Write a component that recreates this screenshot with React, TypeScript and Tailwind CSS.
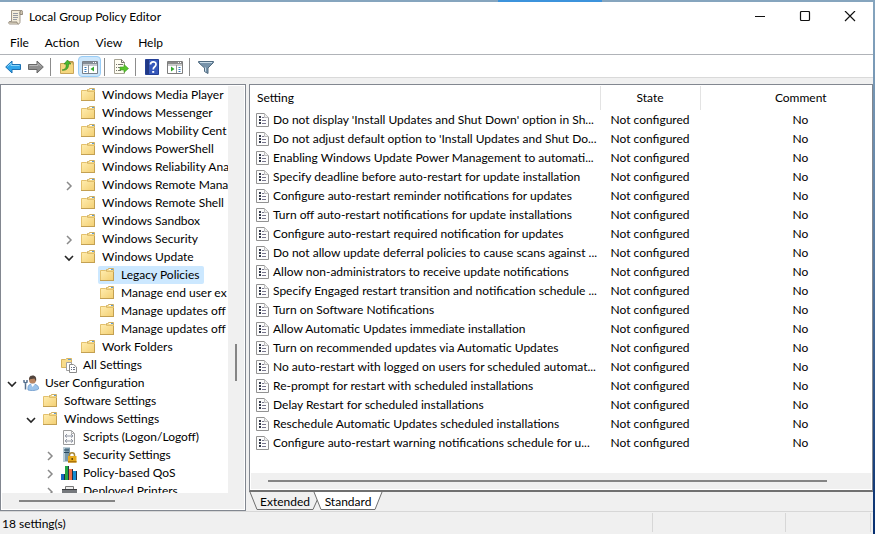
import { useId, useState, type ReactNode } from "react";

type IconKind = "folder" | "allSettings" | "user" | "script" | "security" | "qos" | "printer";
type Chevron = "open" | "closed" | "none";
type TreeNode = { label: string; level: number; icon: IconKind; chevron: Chevron };

const node = (label: string, level: number, icon: IconKind = "folder", chevron: Chevron = "none"): TreeNode => ({
  label,
  level,
  icon,
  chevron,
});

const TREE: TreeNode[] = [
  node("Windows Media Player", 3),
  node("Windows Messenger", 3),
  node("Windows Mobility Cent", 3),
  node("Windows PowerShell", 3),
  node("Windows Reliability Ana", 3),
  node("Windows Remote Mana", 3, "folder", "closed"),
  node("Windows Remote Shell", 3),
  node("Windows Sandbox", 3),
  node("Windows Security", 3, "folder", "closed"),
  node("Windows Update", 3, "folder", "open"),
  node("Legacy Policies", 4),
  node("Manage end user ex", 4),
  node("Manage updates off", 4),
  node("Manage updates off", 4),
  node("Work Folders", 3),
  node("All Settings", 2, "allSettings"),
  node("User Configuration", 0, "user", "open"),
  node("Software Settings", 1),
  node("Windows Settings", 1, "folder", "open"),
  node("Scripts (Logon/Logoff)", 2, "script"),
  node("Security Settings", 2, "security", "closed"),
  node("Policy-based QoS", 2, "qos", "closed"),
  node("Deployed Printers", 2, "printer", "closed"),
];

const INDENT = ["pl-0.5", "pl-[21px]", "pl-10", "pl-[59px]", "pl-[78px]"];

const SETTINGS = [
  "Do not display 'Install Updates and Shut Down' option in Sh...",
  "Do not adjust default option to 'Install Updates and Shut Do...",
  "Enabling Windows Update Power Management to automati...",
  "Specify deadline before auto-restart for update installation",
  "Configure auto-restart reminder notifications for updates",
  "Turn off auto-restart notifications for update installations",
  "Configure auto-restart required notification for updates",
  "Do not allow update deferral policies to cause scans against ...",
  "Allow non-administrators to receive update notifications",
  "Specify Engaged restart transition and notification schedule ...",
  "Turn on Software Notifications",
  "Allow Automatic Updates immediate installation",
  "Turn on recommended updates via Automatic Updates",
  "No auto-restart with logged on users for scheduled automat...",
  "Re-prompt for restart with scheduled installations",
  "Delay Restart for scheduled installations",
  "Reschedule Automatic Updates scheduled installations",
  "Configure auto-restart warning notifications schedule for u...",
];

function FolderShape() {
  const id = useId();
  return (
    <>
      <defs>
        <linearGradient id={id} x1="0" y1="0" x2="1" y2="1">
          <stop offset="0" stopColor="#ffedb0" />
          <stop offset="1" stopColor="#f3cf72" />
        </linearGradient>
      </defs>
      <path d="M7.500 4.500v-2h1l1-1h5v4" fill="#f3d88b" stroke="#d0b064" />
      <path d="M10 2.500h2" stroke="#fff" />
      <path d="M12 2.500h2" stroke="#5b9bd5" />
      <path d="M1.500 3.500h5l1 1h7v9h-13z" fill={`url(#${id})`} stroke="#e3c06c" />
      <path d="M1 13.500h14M14.500 5v9" stroke="#c3a052" />
    </>
  );
}

function TreeIcon({ kind }: { kind: IconKind }) {
  return (
    <svg className="h-4 w-4" viewBox="0 0 16 16" fill="none" aria-hidden="true">
      {kind === "folder" && <FolderShape />}
      {kind === "allSettings" && (
        <>
          <path d="M.5 2.500h4l1-1h5v9h-10z" fill="#f8dc8c" stroke="#d8b45f" />
          <path d="M7 2.500h3" stroke="#5b9bd5" />
          <path d="M5.500 5.500h5v8h-5z" fill="#fff" stroke="#a0a0a0" />
          <path d="M8.500 7.500h4l3 2.500v5.500h-7z" fill="#fff" stroke="#8a8a8a" />
          <path d="M10 10.500h1m1 0h2m-4 2h1m1 0h2" stroke="#6b7386" />
        </>
      )}
      {kind === "user" && (
        <>
          <path d="M5 15c-.5-4 1-6 4-6 4 0 7 1.500 6.500 5-1.500 1.500-7 2-10.500 1z" fill="#9cc3ea" stroke="#5f8fc5" strokeWidth=".7" />
          <path d="m8 9 1.500 3L12 9z" fill="#fff" />
          <circle cx="9.500" cy="5" r="3.500" fill="#b98562" />
          <path d="M6 5C6 1 8 .5 10 .5s4 2 3 6l-1.500-3C9 4 7.500 3.500 6 5z" fill="#51443d" />
          <path d="M1 5v2l1.500 1L4 7V5M2.500 8v6.500" stroke="#55708e" strokeWidth="1.500" />
        </>
      )}
      {kind === "script" && (
        <>
          <path d="M2.500 1.500h8l3 3v11h-11z" fill="#fafafa" stroke="#9a9a9a" />
          <path d="M10.500 1.500v3h3" stroke="#b0b0b0" />
          <path d="M6 5 4 7l2 1.500M10 5l2 2-2 1.500M5 7h6M6 10l-2 2 2 1.500M10 10l2 2-2 1.500M5 12h6" stroke="#737b8b" strokeWidth=".8" />
        </>
      )}
      {kind === "security" && (
        <>
          <path d="M2 .5h7v14H2z" fill="#7898aa" />
          <path d="M2 .5h2v14H2z" fill="#b8cbd5" />
          <path d="M3 3h5M3 5.500h5" stroke="#28485e" />
          <path d="M8.500 9.500V8c0-3 5-3 5 0v1.500" stroke="#a88735" strokeWidth="1.500" />
          <path d="M7 9h8.500v6.500H7z" fill="#e5a91d" />
          <path d="M7 14h8.500v1.500H7z" fill="#ae7509" />
          <path d="M11.200 11v2" stroke="#694708" strokeWidth="1.500" />
        </>
      )}
      {kind === "qos" && (
        <>
          <path d="M0 9h4v6H0z" fill="#1767c3" />
          <path d="M4 1h4v14H4z" fill="#24a644" />
          <path d="M8 4h4v11H8z" fill="#ef6d48" />
          <path d="M12 6h4v9h-4z" fill="#158cd3" />
          <path d="M3.500 9v6M7.500 1v14M11.500 4v11M15.500 6v9" stroke="#253044" />
        </>
      )}
      {kind === "printer" && (
        <>
          <path d="M4.500 3.500h8v4h-8z" fill="#eee" stroke="#777" />
          <path d="M1 6h15v8H1z" fill="#76797d" />
          <path d="M1 6.500h15" stroke="#393b3e" />
          <path d="M4 10h9v5H4z" fill="#e7e7e7" />
        </>
      )}
    </svg>
  );
}

function ChevronIcon({ state }: { state: Chevron }) {
  if (state === "none") return null;
  return (
    <svg className="mt-0.5 h-3 w-3" viewBox="0 0 12 12" fill="none" aria-hidden="true">
      {state === "open" ? (
        <path d="m2 4 4 4 4-4" stroke="#252525" strokeWidth="1.600" />
      ) : (
        <path d="m4 2 4 4-4 4" stroke="#8a8a8a" strokeWidth="1.500" />
      )}
    </svg>
  );
}

function SettingIcon() {
  return (
    <svg className="h-4 w-4 shrink-0" viewBox="0 0 16 16" fill="none" aria-hidden="true">
      <path d="M1.500 1.500h8l4 4v9h-12z" fill="#fcfcfc" stroke="#929292" />
      <path d="M9.500 1.500v4h4" fill="#eee" stroke="#bdbdbd" />
      <path d="M4 4h2v2H4zm0 3h2v2H4zm0 3h2v2H4z" fill="#343a4a" />
      <path d="M7 5.500h2M7 8.500h4M7 11.500h4" stroke="#77758d" />
    </svg>
  );
}

function ToolButton({ label, active, children }: { label: string; active?: boolean; children: ReactNode }) {
  return (
    <button
      type="button"
      aria-label={label}
      className={`flex h-[21px] w-[23px] items-center justify-center rounded-sm border ${
        active ? "border-[#99cdf7] bg-[#cce6fb]" : "border-transparent"
      }`}
    >
      <svg className="h-4 w-4 shrink-0" viewBox="0 0 16 16" fill="none" aria-hidden="true">
        {children}
      </svg>
    </button>
  );
}

const Separator = () => <span className="mr-1 ml-[3px] h-[18px] w-px bg-[#8c8c8c]" />;

function Toolbar() {
  return (
    <div role="toolbar" className="flex h-[23px] shrink-0 items-center border-b border-[#d9d9d9] bg-white pt-px pl-px">
      <ToolButton label="Back">
        <path d="M.7 8 7 2v3.500h8.500v5H7V14z" fill="#31a5ea" stroke="#1b70b3" />
        <path d="M2.500 7.500 6 4v2.500h8.500" stroke="#8dd7fa" />
      </ToolButton>
      <ToolButton label="Forward">
        <path d="M15.300 8 9 2v3.500H.5v5H9V14z" fill="#8f8f8f" stroke="#686868" />
        <path d="M1.500 6.500H10V4.500l3 3" stroke="#b9b9b9" />
      </ToolButton>
      <Separator />
      <ToolButton label="Up one level">
        <path d="M1.500 4.500h5l1-1h7v11h-13z" fill="#f5d77f" stroke="#c8a55a" />
        <path d="M9 2.500h5v3" stroke="#ba984e" />
        <path d="M3 11c3.500-.5 4.500-2.500 4-6H5l3.500-4L12 5H9.500c.5 4.500-2.500 7-6.500 6z" fill="#49b82d" stroke="#30821e" strokeWidth=".6" />
      </ToolButton>
      <ToolButton label="Show console tree" active>
        <path d="M.5 2.500h15v12H.5z" fill="#fff" stroke="#777f89" />
        <path d="M1 3h14v2H1z" fill="#858d97" />
        <path d="M11 3.500h1m1 0h1" stroke="#fff" />
        <path d="M1 6h14M6.500 6v8" stroke="#8c949e" />
        <path d="M2.500 8.500h2m-2 2h2m-2 2h2" stroke="#3478bb" />
        <path d="M12 7.500v5L8.500 10z" fill="#33a92f" />
      </ToolButton>
      <Separator />
      <ToolButton label="Export list">
        <path d="M1.500.5h7l3 3v11h-10z" fill="#fffdf1" stroke="#a5a293" />
        <path d="M8.500.5v3h3M3 5.500h1m1 0h5m-7 3h1m1 0h4m-6 3h1m1 0h3" stroke="#77786f" />
        <path d="M7 8h4V5.500l4.500 4-4.500 4V11H7z" fill="#58c52c" stroke="#3d9a20" strokeWidth=".6" />
      </ToolButton>
      <Separator />
      <ToolButton label="Help">
        <path d="M1.500.5h13v15h-13z" fill="#3657ba" stroke="#233f96" />
        <path d="M2 1h3v14H2z" fill="#213985" />
        <path d="M6.500 5.500C6.500 2 12 2 12 5.300 12 8 9.200 7.500 9.200 10.500" stroke="#fff" strokeWidth="1.700" />
        <path d="M8.200 12h2v1.800h-2z" fill="#fff" />
      </ToolButton>
      <ToolButton label="Show action pane">
        <path d="M.5 2.500h15v12H.5z" fill="#fff" stroke="#7d7d7d" />
        <path d="M1 3h14v2H1z" fill="#8b8b8b" />
        <path d="M11 3.500h1m1 0h1" stroke="#fff" />
        <path d="M1 6h14M9.500 6v8" stroke="#949494" />
        <path d="M11.500 8.500h2m-2 2h2m-2 2h2" stroke="#3478bb" />
        <path d="M4 7.500v5L7.500 10z" fill="#33a92f" />
      </ToolButton>
      <Separator />
      <ToolButton label="Filter">
        <path d="M.5 2.500h15v1L10 9v5.500l-3.500-2V9l-6-5.500z" fill="#7793aa" stroke="#506b80" />
        <path d="M2 3.500h12M7.500 8.500v4" stroke="#c9dbe7" />
      </ToolButton>
    </div>
  );
}

function TitleBar() {
  return (
    <header className="flex h-[29px] shrink-0 items-center bg-white pl-[7px]">
      <svg className="h-4 w-4" viewBox="0 0 16 16" fill="none" aria-hidden="true">
        <path d="M4.500 1.500h10c-2 1-1.500 2-1.500 3v8c0 1 0 2-1.500 2.500H3c-2 0-2-2.500 0-2.500h1.500z" fill="#f4eddb" stroke="#a1988a" />
        <path d="M13 2.500v3h2.500c.5-3 0-4-1-4zM2 13h8c0 1 .5 2 1.500 2" fill="#cfc4ae" stroke="#91887a" />
        <path d="M6 4.500h5m-5 2h5m-5 2h5m-5 2h4" stroke="#969aa2" />
      </svg>
      <h1 className="ml-1.5 flex-1">Local Group Policy Editor</h1>
      <button type="button" aria-label="Minimize" className="flex h-full w-[45px] items-center justify-center">
        <svg className="h-3 w-3" viewBox="0 0 12 12" aria-hidden="true">
          <path d="M1 5.500h10" stroke="#111" />
        </svg>
      </button>
      <button type="button" aria-label="Maximize" className="flex h-full w-[45px] items-center justify-center">
        <svg className="h-3 w-3" viewBox="0 0 12 12" fill="none" aria-hidden="true">
          <rect x="1.500" y=".5" width="9" height="9" rx="1" stroke="#111" strokeWidth="1.200" />
        </svg>
      </button>
      <button type="button" aria-label="Close" className="flex h-full w-[46px] items-center justify-center">
        <svg className="h-3 w-3" viewBox="0 0 12 12" aria-hidden="true">
          <path d="m1 0 10 10M11 0 1 10" stroke="#111" strokeWidth="1.200" />
        </svg>
      </button>
    </header>
  );
}

function ConsoleTree() {
  const [selected, setSelected] = useState(10);
  return (
    <nav aria-label="Console tree" className="flex w-[246px] shrink-0 flex-col border border-[#828790] bg-white p-px">
      <div className="flex min-h-0 flex-1">
        <ul className="min-w-0 flex-1 overflow-hidden">
          {TREE.map((item, i) => (
            <li key={i}>
              <button
                type="button"
                onClick={() => setSelected(i)}
                className={`flex h-[18px] items-center whitespace-nowrap ${INDENT[item.level]}`}
              >
                <span className="flex w-[18px] shrink-0 justify-center pr-0.5">
                  <ChevronIcon state={item.chevron} />
                </span>
                <span
                  className={`flex h-[18px] items-center gap-1.5 rounded-xs pr-1 pl-px ${i === selected ? "bg-[#cce8ff]" : ""}`}
                >
                  <TreeIcon kind={item.icon} />
                  <span>{item.label}</span>
                </span>
              </button>
            </li>
          ))}
        </ul>
        <div className="flex w-4 shrink-0 flex-col items-center bg-[#f0f0f0]">
          <div className="flex-[257]" />
          <div className="w-0.5 flex-[37] bg-[#858585]" />
          <div className="flex-[112]" />
        </div>
      </div>
      <div className="flex h-4 shrink-0 items-center bg-[#f0f0f0] px-[17px]">
        <div className="h-0.5 w-24 bg-[#858585]" />
      </div>
    </nav>
  );
}

function SettingsPane() {
  return (
    <section aria-label="Settings" className="flex min-w-0 flex-1 flex-col">
      <div className="flex min-h-0 flex-1 flex-col border border-b-2 border-[#828790] border-b-[#707070] bg-white p-px">
        <div className="min-h-0 flex-1 overflow-hidden">
          <table className="w-[650px] table-fixed border-collapse">
            <colgroup>
              <col className="w-[349px]" />
              <col className="w-[100px]" />
              <col className="w-[201px]" />
            </colgroup>
            <thead>
              <tr className="h-6">
                <th className="border-r border-[#e3e3e3] p-0 pl-1.5 text-left font-normal">Setting</th>
                <th className="border-r border-[#e3e3e3] p-0 text-center font-normal">State</th>
                <th className="p-0 text-center font-normal">Comment</th>
              </tr>
            </thead>
            <tbody>
              {SETTINGS.map((name) => (
                <tr key={name} className="h-[19px]">
                  <td className="p-0 pl-1">
                    <div className="flex items-center gap-0.5 whitespace-nowrap">
                      <SettingIcon />
                      <span>{name}</span>
                    </div>
                  </td>
                  <td className="p-0 text-center whitespace-nowrap">Not configured</td>
                  <td className="p-0 text-center">No</td>
                </tr>
              ))}
            </tbody>
          </table>
        </div>
        <div className="flex h-4 shrink-0 items-center bg-[#f0f0f0] pr-11 pl-[17px]">
          <div className="h-0.5 flex-1 bg-[#858585]" />
        </div>
      </div>
      <div role="tablist" className="relative flex h-[19px] shrink-0 items-center">
        <svg className="absolute top-0 left-0 h-[19px] w-[140px]" viewBox="0 0 140 19" fill="none" aria-hidden="true">
          <path d="m1 0 7 17.500h56L70 4" stroke="#6e6e6e" />
          <path d="m65 0 7 17.500h54L133 0" fill="#fff" stroke="#6e6e6e" />
        </svg>
        <button type="button" role="tab" aria-selected="false" className="relative w-[72px] text-center">
          Extended
        </button>
        <button type="button" role="tab" aria-selected="true" className="relative w-[54px] text-center">
          Standard
        </button>
      </div>
    </section>
  );
}

export default function App() {
  return (
    <div className="flex h-screen overflow-hidden bg-[#f0f0f0] font-[Lato,'Segoe_UI',sans-serif] text-[12px] leading-4 text-black">
      <div className="flex min-w-0 flex-1 flex-col">
        <div className="flex h-0.5 shrink-0 bg-[#86a5be]">
          <div className="w-[57%]" />
          <div className="w-[12%] bg-[#3c93dc]" />
        </div>
        <TitleBar />
        <nav aria-label="Menu bar" className="flex h-6 shrink-0 items-center border-b border-[#b0b3b8] bg-white pl-0.5">
          <button type="button" className="px-2">File</button>
          <button type="button" className="px-2">Action</button>
          <button type="button" className="px-2">View</button>
          <button type="button" className="px-2">Help</button>
        </nav>
        <Toolbar />
        <main className="flex min-h-0 flex-1 gap-[3px] pt-1.5">
          <ConsoleTree />
          <SettingsPane />
        </main>
        <footer className="flex h-[23px] shrink-0 border-t border-[#d7d7d7] pt-px pb-0.5">
          <span className="flex flex-1 items-center border-r border-[#d7d7d7] pt-0.5 pl-0.5">18 setting(s)</span>
          <span className="w-[133px] border-r border-[#d7d7d7]" />
          <span className="w-[85px] border-r border-[#d7d7d7]" />
          <span className="w-0.5" />
        </footer>
      </div>
      <div className="w-0.5 shrink-0 bg-linear-to-b from-[#86a5be] via-[#55789f] to-[#062f70]" />
    </div>
  );
}
